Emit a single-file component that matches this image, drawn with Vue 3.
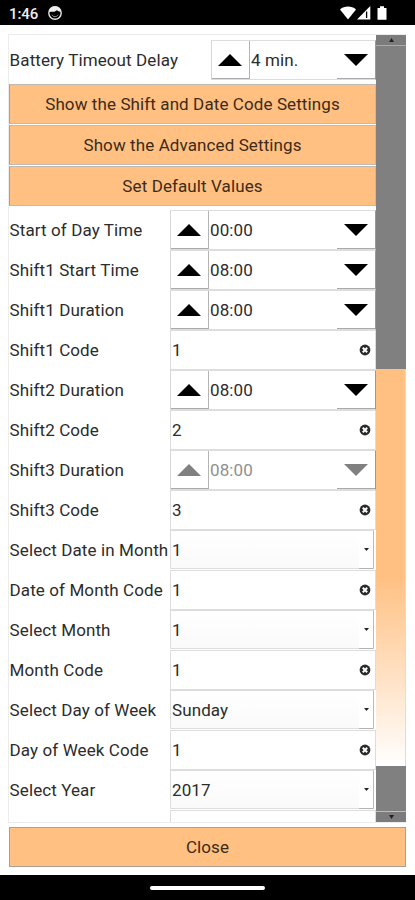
<script setup>
const actions = [
  'Show the Shift and Date Code Settings',
  'Show the Advanced Settings',
  'Set Default Values',
]
const fields = [
  { label: 'Start of Day Time', kind: 'spin', value: '00:00' },
  { label: 'Shift1 Start Time', kind: 'spin', value: '08:00' },
  { label: 'Shift1 Duration', kind: 'spin', value: '08:00' },
  { label: 'Shift1 Code', kind: 'text', value: '1' },
  { label: 'Shift2 Duration', kind: 'spin', value: '08:00' },
  { label: 'Shift2 Code', kind: 'text', value: '2' },
  { label: 'Shift3 Duration', kind: 'spin', value: '08:00', disabled: true },
  { label: 'Shift3 Code', kind: 'text', value: '3' },
  { label: 'Select Date in Month', kind: 'select', value: '1' },
  { label: 'Date of Month Code', kind: 'text', value: '1' },
  { label: 'Select Month', kind: 'select', value: '1' },
  { label: 'Month Code', kind: 'text', value: '1' },
  { label: 'Select Day of Week', kind: 'select', value: 'Sunday' },
  { label: 'Day of Week Code', kind: 'text', value: '1' },
  { label: 'Select Year', kind: 'select', value: '2017' },
]
</script>

<template>
  <div class="screen">
    <header class="status">
      <span class="clock">1:46</span>
      <svg class="face" width="16" height="16" viewBox="0 0 16 16">
        <circle cx="8" cy="8" r="6.2" fill="none" stroke="#e4e4e4" stroke-width="1.4" />
        <path d="M2 7C2 3 5 1.5 8 1.5S14 3 14 7L11.5 6.3 9.8 5.2 7.5 6.8H4Z" fill="#eee" />
        <path d="M5 9.8C6 12.3 10 12.3 11 9.8" fill="none" stroke="#999" stroke-width="1" />
      </svg>
      <svg class="signals" width="48" height="16" viewBox="0 0 48 16">
        <path d="M0 4.4C4.5.6 11.5.6 16 4.4L8 14.5Z" fill="#fff" />
        <path d="M17 14.5 30.3 1V14.5Z" fill="#fff" />
        <path d="M26.6 6.5V13" stroke="#000" stroke-width="1.3" />
        <path d="M37.5 3H40V1.3H44V3H46.5V14.7H37.5Z" fill="#fff" />
      </svg>
    </header>

    <main class="main">
      <section class="panel">
        <div class="content">
          <div class="sliver"></div>
          <div class="row first">
            <span class="label">Battery Timeout Delay</span>
            <div class="spin">
              <button class="step up"><svg width="24" height="12" viewBox="0 0 24 12"><path d="M0 12 12 0 24 12Z" fill="currentColor" /></svg></button>
              <span class="value">4 min.</span>
              <button class="step down"><svg width="24" height="12" viewBox="0 0 24 12"><path d="M0 0H24L12 12Z" fill="currentColor" /></svg></button>
            </div>
          </div>
          <div class="actions">
            <button v-for="a in actions" :key="a" class="action">{{ a }}</button>
          </div>
          <div v-for="f in fields" :key="f.label" class="row">
            <span class="label">{{ f.label }}</span>
            <div v-if="f.kind === 'spin'" class="spin" :class="{ disabled: f.disabled }">
              <button class="step up"><svg width="24" height="12" viewBox="0 0 24 12"><path d="M0 12 12 0 24 12Z" fill="currentColor" /></svg></button>
              <span class="value">{{ f.value }}</span>
              <button class="step down"><svg width="24" height="12" viewBox="0 0 24 12"><path d="M0 0H24L12 12Z" fill="currentColor" /></svg></button>
            </div>
            <div v-else-if="f.kind === 'text'" class="entry">
              <span>{{ f.value }}</span>
              <svg width="12" height="12" viewBox="0 0 12 12">
                <circle cx="6" cy="6" r="5.4" fill="#2a2a2a" />
                <path d="M3.8 3.8 8.2 8.2M8.2 3.8 3.8 8.2" stroke="#fff" stroke-width="2" />
              </svg>
            </div>
            <div v-else class="select">
              <span>{{ f.value }}</span>
              <i class="drop"><svg width="5" height="3" viewBox="0 0 5 3"><path d="M0 0H5L2.5 3Z" fill="#222" /></svg></i>
            </div>
          </div>
          <div class="row last">
            <span class="label"></span>
            <div class="entry"></div>
          </div>
        </div>
        <div class="scrollbar">
          <div class="cap top"><svg width="5" height="4" viewBox="0 0 5 4"><path d="M0 4 2.5 0 5 4Z" fill="#222" /></svg></div>
          <div class="thumb"></div>
          <div class="cap bottom"><svg width="5" height="4" viewBox="0 0 5 4"><path d="M0 0H5L2.5 4Z" fill="#222" /></svg></div>
        </div>
      </section>
      <button class="close">Close</button>
    </main>

    <footer class="nav"><i class="pill"></i></footer>
  </div>
</template>

<style>
body { margin: 0; background: #fff; }
</style>

<style scoped>
* { box-sizing: border-box; }
.screen {
  width: 415px; height: 900px; display: flex; flex-direction: column;
  font-family: Roboto, "Liberation Sans", sans-serif; font-size: 17px;
  letter-spacing: 0.1px; color: #2c2c2c; background: #fff; overflow: hidden;
}
button { font: inherit; letter-spacing: inherit; color: inherit; margin: 0; padding: 0; border: 0; border-radius: 0; background: none; }
svg { display: block; flex: none; }
.status { height: 25px; flex: none; background: #000; display: flex; align-items: center; padding: 1px 27px 0 9px; }
.clock { color: #eee; font-size: 15px; font-weight: 500; letter-spacing: -0.1px; width: 38px; line-height: 22px; padding-top: 1px; }
.signals { margin-left: auto; }
.main { flex: 1; min-height: 0; padding: 9px 8px 8px; display: flex; flex-direction: column; gap: 4px; }
.panel { height: 789px; flex: none; display: flex; border: 1px solid #ececec; border-right: 0; overflow: hidden; }
.content { width: 367px; flex: none; display: flex; flex-direction: column; }
.sliver { width: 16px; height: 1px; margin: -1px 0 0 auto; background: #bbb; flex: none; }
.row { height: 40px; flex: none; display: grid; grid-template-columns: 161px 206px; }
.first { height: 40px; margin-top: 5px; grid-template-columns: 202px 165px; }
.label { white-space: nowrap; line-height: 40px; padding-left: 0.6px; }
.spin { height: 40px; display: flex; border: 1px solid #d6d6d6; border-bottom: 1px solid #ddd; border-right-color: #999; border-top-color: #ddd; color: #000; }
.step { width: 38px; flex: none; display: flex; justify-content: center; align-items: center; }
.up { border-right: 1px solid #b4b4b4; border-bottom: 1px solid #aaa; padding-right: 1px; }
.down { border-bottom: 1px solid #aaa; padding-top: 1px; }
.value { flex: 1; padding-left: 1px; line-height: 39px; color: #2c2c2c; }
.disabled { color: #808080; }
.disabled .value { color: #909090; }
.entry { height: 40px; display: flex; align-items: center; justify-content: space-between; padding: 0 4px 0 1px; border: 1px solid #ddd; }
.select { height: 39px; width: 204px; display: flex; justify-content: space-between; padding-left: 1px; border: 1px solid #ddd; border-right-color: #bbb; line-height: 39px; background: linear-gradient(#fff, #fafafa); }
.drop { width: 14px; display: flex; align-items: center; justify-content: center; background: #fff; box-shadow: 0 1px #b4b4b4; }
.actions { display: flex; flex-direction: column; gap: 1px; margin: 4px 0 4px; }
.action { height: 40px; background: #ffc082; border: 1px solid #c0bab4; border-left-color: #aaa098; text-align: center; color: #3d2b18; }
.last { height: 12px; overflow: hidden; }
.scrollbar { width: 30px; flex: none; background: #808080; display: flex; flex-direction: column; justify-content: space-between; }
.cap { height: 11px; display: flex; align-items: center; justify-content: center; background: #7c7c7c; }
.top { border-bottom: 1px solid #aaa; }
.bottom { border-top: 1px solid #bbb; }
.thumb { height: 397px; margin-top: 278px; background: linear-gradient(#ffc082 0, #ffc082 52%, #fff 100%); border-right: 1px solid #ddd; }
.close { height: 40px; width: 397px; margin-left: 1px; flex: none; background: #ffc082; border: 1px solid #a99f96; color: #3d2b18; }
.nav { height: 25px; flex: none; background: #000; display: flex; align-items: center; justify-content: center; }
.pill { width: 115px; height: 4px; border-radius: 2px; background: #fff; }
</style>
